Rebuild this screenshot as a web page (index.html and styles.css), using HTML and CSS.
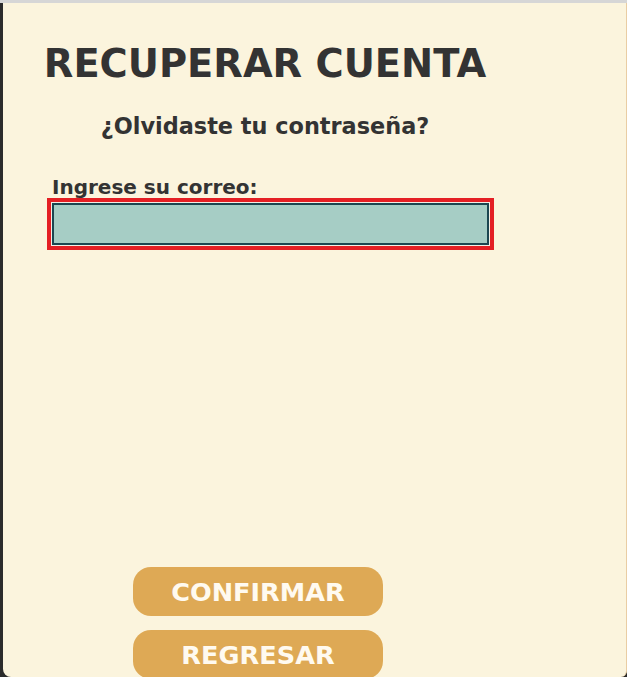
FILE: index.html
```html
<!DOCTYPE html>
<html lang="es">
<head>
<meta charset="utf-8">
<title>Recuperar cuenta</title>
<link rel="stylesheet" href="styles.css">
</head>
<body>
<div class="topbar"></div>
<div class="stage">
  <div class="edge"></div>
  <main class="panel">
    <form class="form">
      <h1 class="title">RECUPERAR CUENTA</h1>
      <h2 class="subtitle">¿Olvidaste tu contraseña?</h2>
      <label class="label" for="correo">Ingrese su correo:</label>
      <input class="field" id="correo" type="email">
      <div class="actions">
        <button class="btn" type="button">CONFIRMAR</button>
        <button class="btn" type="button">REGRESAR</button>
      </div>
    </form>
  </main>
</div>
</body>
</html>
```
FILE: styles.css
```css
html, body {
  margin: 0;
  padding: 0;
  height: 100%;
  overflow: hidden;
}
body {
  background: #2a2a2a;
  font-family: "DejaVu Sans", Verdana, sans-serif;
  display: flex;
  flex-direction: column;
}
.topbar {
  height: 3px;
  background: #d6d6d6;
  flex: none;
}
.stage {
  flex: 1;
  display: flex;
  min-height: 0;
}
.edge {
  width: 3px;
  flex: none;
  background: #2b2b2b;
}
.panel {
  flex: 1;
  background: #fbf4dd;
  border-right: 1px solid #e9cda3;
  border-radius: 0 0 6px 8px;
  overflow: hidden;
}
.form {
  display: flex;
  flex-direction: column;
  padding-left: 37px;
  width: 450px;
  margin: 0;
}
.title {
  margin: 38px 0 0 0;
  font-size: 38.4px;
  line-height: 45px;
  font-weight: bold;
  color: #333333;
  text-align: center;
  white-space: nowrap;
}
.subtitle {
  margin: 27px 0 0 0;
  font-size: 22.4px;
  line-height: 26px;
  font-weight: bold;
  color: #333333;
  text-align: center;
}
.label {
  margin: 37px 0 0 12px;
  font-size: 20px;
  line-height: 23px;
  font-weight: bold;
  color: #333333;
}
.field {
  margin: 4px 0 0 12px;
  box-sizing: border-box;
  width: 437px;
  height: 42px;
  border: 2px solid #1b4651;
  background: #a6cdc5;
  box-shadow: 0 0 0 1px #f2efe6, 0 0 0 5px #e41f24;
  outline: none;
  padding: 0 6px;
  font-family: inherit;
}
.actions {
  display: flex;
  flex-direction: column;
  gap: 14px;
  margin: 322px 0 0 93px;
}
.btn {
  width: 250px;
  height: 49px;
  border: none;
  border-radius: 18px;
  background: #dea955;
  color: #fffaf0;
  font-family: "DejaVu Sans", Verdana, sans-serif;
  font-size: 25.6px;
  font-weight: bold;
  display: flex;
  align-items: center;
  justify-content: center;
  padding: 0;
  cursor: pointer;
}
```
